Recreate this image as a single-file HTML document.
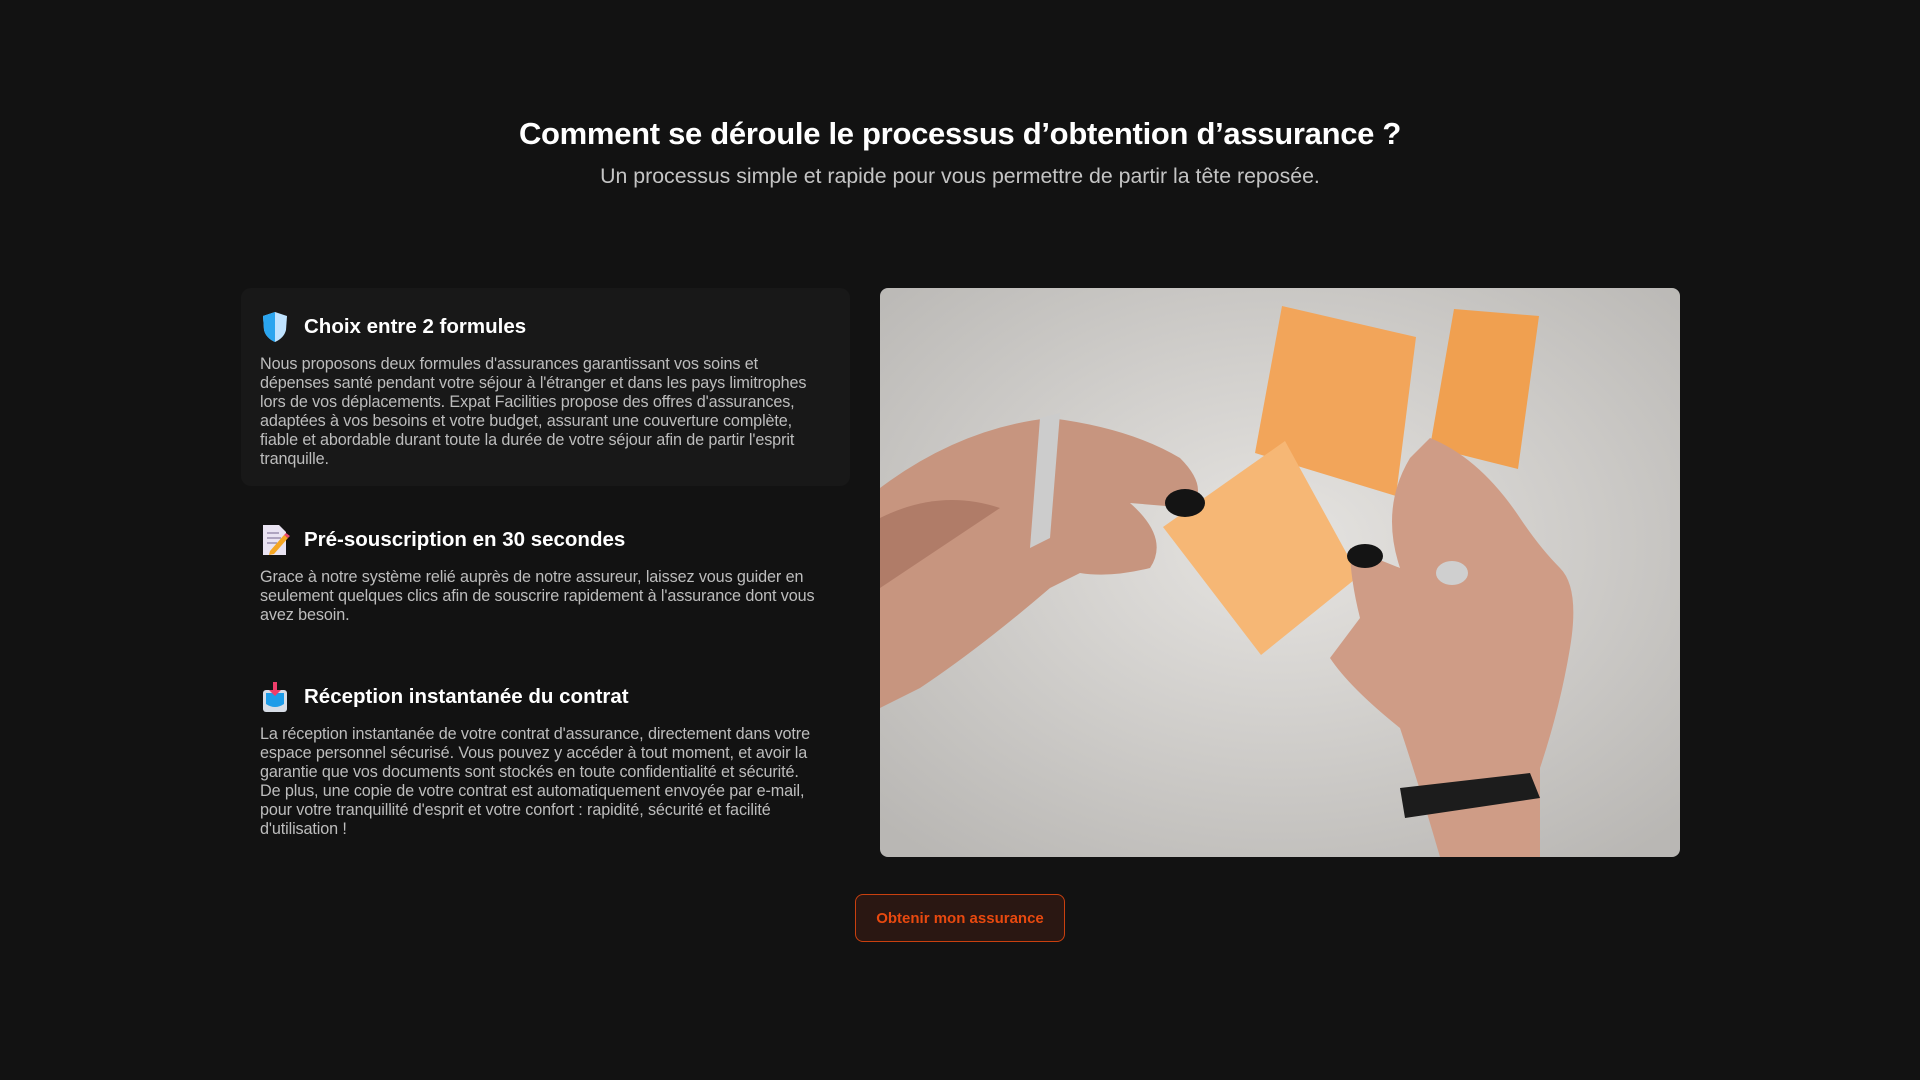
<!DOCTYPE html>
<html><head><meta charset="utf-8"><style>
*{margin:0;padding:0;box-sizing:border-box}
body{width:1920px;height:1080px;background:#121212;font-family:"Liberation Sans",sans-serif;color:#fff;position:relative;overflow:hidden}
h1{position:absolute;top:116px;left:0;width:1920px;text-align:center;font-size:31px;font-weight:bold;letter-spacing:-0.3px}
.sub{position:absolute;top:164px;left:0;width:1920px;text-align:center;font-size:21.3px;color:#c4c4c4}
.card{position:absolute;left:241px;width:609px;padding:0 19px}
.card.bg{background:#181818;border-radius:10px}
.h{display:flex;align-items:center;font-size:20.5px;font-weight:bold;height:36px}
.h svg{margin-right:14px}
.p{font-size:16.2px;line-height:19px;color:#bdbdbd;margin-top:10px;letter-spacing:-0.12px;white-space:nowrap}
.img{position:absolute;left:880px;top:288px;width:800px;height:569px;border-radius:8px;overflow:hidden}
.btn{position:absolute;left:855px;top:894px;width:210px;height:48px;border:1.5px solid #c9400f;border-radius:8px;background:#2a1712;color:#e8490f;font-weight:bold;font-size:15px;display:flex;align-items:center;justify-content:center}
</style></head><body>
<h1>Comment se déroule le processus d’obtention d’assurance ?</h1>
<div class="sub">Un processus simple et rapide pour vous permettre de partir la tête reposée.</div>

<div class="card bg" style="top:288px;height:198px;padding-top:21px">
<div class="h"><svg width="30" height="34" viewBox="0 0 30 34"><path d="M15 2 L27 6 L26 20 Q24 28 15 32 Q6 28 4 20 L3 6Z" fill="#bfe3ff"/><path d="M15 2 L3 6 L4 20 Q6 28 15 32Z" fill="#2aa5ef"/></svg>Choix entre 2 formules</div>
<div class="p">Nous proposons deux formules d'assurances garantissant vos soins et<br>dépenses santé pendant votre séjour à l'étranger et dans les pays limitrophes<br>lors de vos déplacements. Expat Facilities propose des offres d'assurances,<br>adaptées à vos besoins et votre budget, assurant une couverture complète,<br>fiable et abordable durant toute la durée de votre séjour afin de partir l'esprit<br>tranquille.</div>
</div>

<div class="card" style="top:522px">
<div class="h"><svg width="30" height="34" viewBox="0 0 30 34"><path d="M3 2 H19 L26 9 V32 H3Z" fill="#e9e3f2"/><path d="M7 10h12M7 15h14M7 20h10" stroke="#9a8fb0" stroke-width="1.5"/><path d="M10 28 L24 12 L28 15 L14 31 L9 32Z" fill="#f5a623"/><path d="M24 12 L28 15 L30 13 L26 10Z" fill="#ea4a6a"/></svg>Pré-souscription en 30 secondes</div>
<div class="p">Grace à notre système relié auprès de notre assureur, laissez vous guider en<br>seulement quelques clics afin de souscrire rapidement à l'assurance dont vous<br>avez besoin.</div>
</div>

<div class="card" style="top:679px">
<div class="h"><svg width="30" height="34" viewBox="0 0 30 34"><rect x="3" y="10" width="24" height="22" rx="3" fill="#d7dde6"/><path d="M6 13 H24 V24 Q15 30 6 24Z" fill="#1e9ce8"/><path d="M13 2 H17 V10 H21 L15 16 L9 10 H13Z" fill="#ee3d6a"/></svg>Réception instantanée du contrat</div>
<div class="p">La réception instantanée de votre contrat d'assurance, directement dans votre<br>espace personnel sécurisé. Vous pouvez y accéder à tout moment, et avoir la<br>garantie que vos documents sont stockés en toute confidentialité et sécurité.<br>De plus, une copie de votre contrat est automatiquement envoyée par e-mail,<br>pour votre tranquillité d'esprit et votre confort : rapidité, sécurité et facilité<br>d'utilisation !</div>
</div>

<div class="img"><svg width="800" height="569" viewBox="0 0 800 569">
<defs><radialGradient id="bg" cx="0.5" cy="0.45" r="0.7"><stop offset="0" stop-color="#e6e4e1"/><stop offset="1" stop-color="#b9b7b4"/></radialGradient></defs>
<rect width="800" height="569" fill="url(#bg)"/>
<polygon points="402,18 536,49 516,208 375,165" fill="#f2a55a"/>
<polygon points="574,21 659,28 638,181 550,159" fill="#f0a050"/>
<path d="M0 200 Q80 140 170 130 Q250 140 300 170 Q330 200 310 220 L250 215 Q290 250 270 280 Q230 290 200 285 L170 300 Q100 360 40 400 L0 420Z" fill="#c7957f"/>
<path d="M0 230 Q60 200 120 220 L0 300Z" fill="#b07c68"/>
<path d="M160 130 L180 125 L170 250 L150 260Z" fill="#ccc" />
<polygon points="283,239 405,153 479,288 381,367" fill="#f6b775"/>
<path d="M550 150 Q600 170 640 230 Q660 260 680 280 Q700 300 690 360 Q680 420 660 480 L660 569 L560 569 Q540 500 520 440 Q470 400 450 370 L480 330 Q470 290 470 260 L520 280 Q500 220 530 170Z" fill="#cf9c86"/>
<path d="M520 500 L650 485 L660 510 L525 530Z" fill="#1c1c1c"/>
<ellipse cx="305" cy="215" rx="20" ry="14" fill="#141414"/>
<ellipse cx="485" cy="268" rx="18" ry="12" fill="#141414"/>
<ellipse cx="572" cy="285" rx="16" ry="12" fill="#cfcfcf"/>
</svg></div>

<div class="btn">Obtenir mon assurance</div>
</body></html>
